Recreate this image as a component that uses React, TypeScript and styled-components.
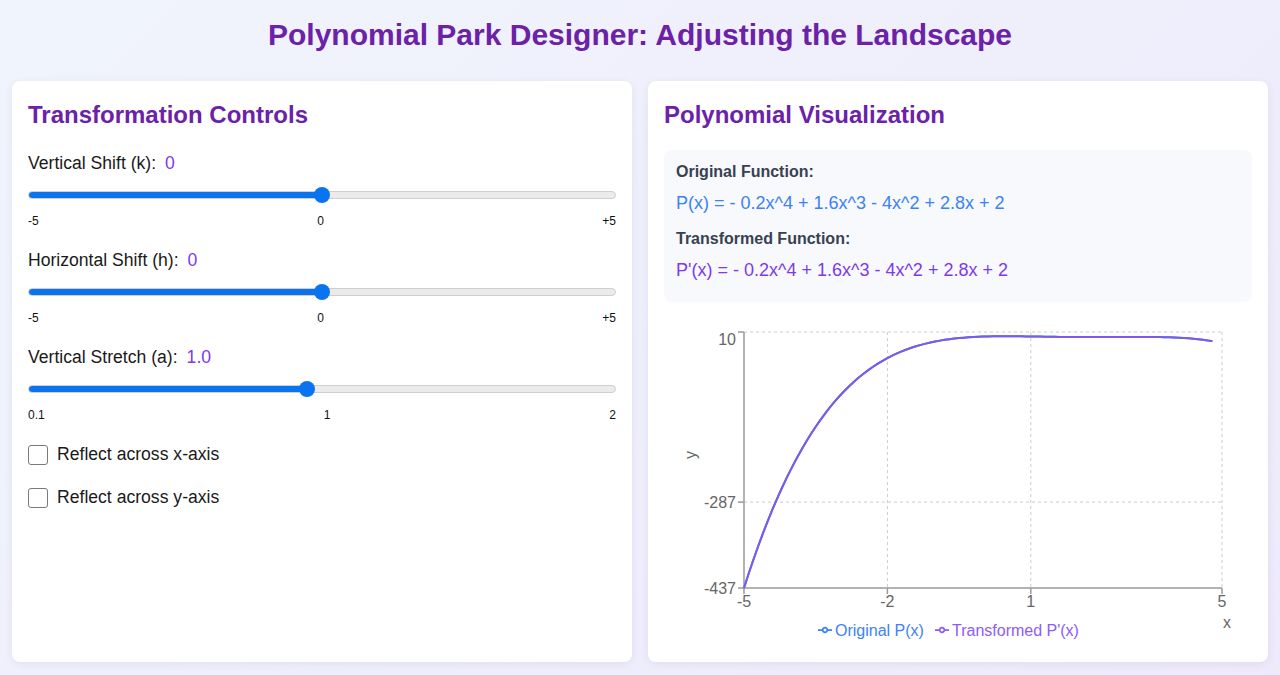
import React, { ChangeEvent, useMemo, useState } from 'react';
import styled, { createGlobalStyle } from 'styled-components';

const GlobalStyle = createGlobalStyle`
  * {
    box-sizing: border-box;
  }
  body {
    margin: 0;
    font-family: 'Liberation Sans', Arial, Helvetica, sans-serif;
    color: #1f1f1f;
  }
`;

const BASE = [2, 2.8, -4, 1.6, -0.2];

const StyledPage = styled.div`
  height: 100vh;
  display: flex;
  flex-direction: column;
  padding: 18px 12px 13px;
  background: linear-gradient(135deg, #f0f4fc 0%, #eeeafb 100%);
`;

const StyledTitle = styled.h1`
  margin: 0 0 29px;
  font-size: 30px;
  line-height: 34px;
  font-weight: 700;
  text-align: center;
  color: #6b21a8;
`;

const StyledGrid = styled.div`
  flex: 1;
  display: grid;
  grid-template-columns: 1fr 1fr;
  gap: 16px;
  min-height: 0;
`;

const StyledPanel = styled.section`
  background: #ffffff;
  border-radius: 8px;
  box-shadow: 0 2px 8px rgba(60, 40, 120, 0.08);
  padding: 20px 16px;
  display: flex;
  flex-direction: column;
  min-height: 0;
`;

const StyledHeading = styled.h2<{ $gap: number }>`
  margin: 0 0 ${(props) => props.$gap}px;
  font-size: 24px;
  line-height: 28px;
  font-weight: 700;
  color: #6b21a8;
`;

const StyledControls = styled.div`
  display: flex;
  flex-direction: column;
  gap: 22px;
`;

const StyledGroup = styled.div`
  display: flex;
  flex-direction: column;
`;

const StyledLabel = styled.div`
  font-size: 17.6px;
  line-height: 21px;
  color: #1a1a1a;
`;

const StyledValue = styled.span`
  margin-left: 9px;
  color: #7c3aed;
`;

const StyledRange = styled.input<{ $fill: number }>`
  appearance: none;
  -webkit-appearance: none;
  width: 100%;
  height: 16px;
  margin: 13px 0 11px;
  background: transparent;
  outline: none;

  &::-webkit-slider-runnable-track {
    height: 8px;
    border-radius: 4px;
    border: 1px solid #cfcfcf;
    background: linear-gradient(
      to right,
      #0a74f0 0,
      #0a74f0 calc(8px + ${(props) => props.$fill} * (100% - 16px)),
      #ebebeb calc(8px + ${(props) => props.$fill} * (100% - 16px)),
      #ebebeb 100%
    );
  }

  &::-webkit-slider-thumb {
    -webkit-appearance: none;
    width: 16px;
    height: 16px;
    margin-top: -5px;
    border-radius: 50%;
    background: #0a74f0;
    border: none;
  }
`;

const StyledTicks = styled.div`
  display: flex;
  justify-content: space-between;
  font-size: 12px;
  line-height: 14px;
  color: #111;
`;

const StyledCheckRow = styled.label`
  display: flex;
  align-items: center;
  gap: 9px;
  font-size: 17.6px;
  line-height: 21px;
  color: #1a1a1a;
  cursor: pointer;
`;

const StyledCheckbox = styled.input`
  appearance: none;
  -webkit-appearance: none;
  width: 20px;
  height: 20px;
  margin: 0;
  border: 1px solid #7a7a7a;
  border-radius: 3px;
  background: #fff;
  position: relative;

  &:checked {
    background: #0a74f0;
    border-color: #0a74f0;
  }
  &:checked::after {
    content: '';
    position: absolute;
    left: 6px;
    top: 2px;
    width: 5px;
    height: 10px;
    border: solid #fff;
    border-width: 0 2px 2px 0;
    transform: rotate(45deg);
  }
`;

const StyledFunctionBox = styled.div`
  background: #f8f9fc;
  border-radius: 8px;
  padding: 12px 12px 21px;
  display: flex;
  flex-direction: column;
  gap: 15px;
`;

const StyledFunctionTitle = styled.div`
  font-size: 16px;
  line-height: 19px;
  font-weight: 700;
  color: #374151;
  margin-bottom: 12px;
`;

const StyledFormula = styled.div<{ $color: string }>`
  font-size: 18px;
  line-height: 21px;
  color: ${(props) => props.$color};
`;

const StyledChart = styled.svg`
  display: block;
  margin-top: 16px;
  font-family: 'Liberation Sans', Arial, Helvetica, sans-serif;
`;

const fmt = (n: number) => String(Math.round(n * 100) / 100);

const formatPoly = (c: number[]) => {
  const parts: string[] = [];
  for (let p = c.length - 1; p >= 0; p--) {
    const v = Math.round(c[p] * 100) / 100;
    if (v === 0) continue;
    const sign = v < 0 ? '- ' : parts.length ? '+ ' : '';
    const pow = p === 0 ? '' : p === 1 ? 'x' : `x^${p}`;
    parts.push(`${sign}${fmt(Math.abs(v))}${pow}`);
  }
  return parts.length ? parts.join(' ') : '0';
};

const binom = (n: number, k: number) => {
  let r = 1;
  for (let i = 1; i <= k; i++) r = (r * (n - k + i)) / i;
  return r;
};

const transform = (k: number, h: number, a: number, rx: boolean, ry: boolean) => {
  const r = ry ? -1 : 1;
  const s = rx ? -a : a;
  const out = [0, 0, 0, 0, 0];
  BASE.forEach((c, n) => {
    for (let j = 0; j <= n; j++) {
      out[j] += c * Math.pow(r, n) * binom(n, j) * Math.pow(-h, n - j);
    }
  });
  const res = out.map((v) => v * s);
  res[0] += k;
  return res;
};

const evalPoly = (c: number[], x: number) => c.reduce((acc, v, i) => acc + v * Math.pow(x, i), 0);

type SliderProps = {
  label: string;
  value: number;
  display: string;
  min: number;
  max: number;
  step: number;
  ticks: string[];
  onChange: (v: number) => void;
};

const Slider = ({ label, value, display, min, max, step, ticks, onChange }: SliderProps) => (
  <StyledGroup>
    <StyledLabel>
      {label}
      <StyledValue>{display}</StyledValue>
    </StyledLabel>
    <StyledRange
      type='range'
      min={min}
      max={max}
      step={step}
      value={value}
      $fill={(value - min) / (max - min)}
      onChange={(e: ChangeEvent<HTMLInputElement>) => onChange(parseFloat(e.target.value))}
    />
    <StyledTicks>
      {ticks.map((t) => (
        <span key={t}>{t}</span>
      ))}
    </StyledTicks>
  </StyledGroup>
);

// chart geometry, in svg units
const W = 588;
const H = 324;
const PL = 80;
const PR = 558;
const PT = 14;
const PB = 270;
const XT = [-5, -2, 1, 5];

const LegendIcon = ({ x, color }: { x: number; color: string }) => (
  <g transform={`translate(${x}, 305) scale(0.4375)`}>
    <path
      d='M0,16h10.67A5.33,5.33,0,1,1,21.33,16H32M21.33,16A5.33,5.33,0,1,1,10.67,16'
      fill='none'
      stroke={color}
      strokeWidth={4}
    />
  </g>
);

const Chart = ({ original, changed }: { original: number[]; changed: number[] }) => {
  const xs = useMemo(() => {
    const arr: number[] = [];
    for (let i = 0; i <= 98; i++) arr.push(-5 + i * 0.1);
    return arr;
  }, []);

  const ys1 = xs.map((x) => evalPoly(original, x));
  const ys2 = xs.map((x) => evalPoly(changed, x));
  const all = [...ys1, ...ys2];
  const lo = Math.floor(Math.min(...all) + 1e-9);
  const hi = Math.ceil(Math.max(...all) / 10) * 10;
  const mid = lo + Math.ceil((hi - lo) / 3 / 10) * 10;
  const yTicks = [hi, mid, lo];

  const sx = (x: number) => PL + ((x + 5) / 10) * (PR - PL);
  const sy = (v: number) => PB - ((v - lo) / (hi - lo)) * (PB - PT);
  const path = (ys: number[]) =>
    ys.map((v, i) => `${i ? 'L' : 'M'}${sx(xs[i]).toFixed(2)},${sy(v).toFixed(2)}`).join('');

  return (
    <StyledChart width={W} height={H} viewBox={`0 0 ${W} ${H}`}>
      <g stroke='#cccccc' strokeDasharray='3 3'>
        {yTicks.slice(0, 2).map((t) => (
          <line key={t} x1={PL} x2={PR} y1={sy(t)} y2={sy(t)} />
        ))}
        {XT.slice(1).map((t) => (
          <line key={t} x1={sx(t)} x2={sx(t)} y1={PT} y2={PB} />
        ))}
      </g>
      <g stroke='#9a9a9a' strokeWidth={1.5}>
        <line x1={PL} x2={PL} y1={PT} y2={PB} />
        <line x1={PL} x2={PR} y1={PB} y2={PB} />
        {yTicks.map((t) => (
          <line key={t} x1={PL - 6} x2={PL} y1={sy(t)} y2={sy(t)} />
        ))}
        {XT.map((t) => (
          <line key={t} x1={sx(t)} x2={sx(t)} y1={PB} y2={PB + 6} />
        ))}
      </g>
      <g fill='#666666' fontSize={16}>
        {yTicks.map((t, i) => (
          <text key={t} x={PL - 8} y={sy(t) + (i === 0 ? 13 : 6)} textAnchor='end'>
            {t}
          </text>
        ))}
        {XT.map((t) => (
          <text key={t} x={sx(t)} y={PB + 19} textAnchor='middle'>
            {t}
          </text>
        ))}
        <text x={27} y={137} textAnchor='middle' transform='rotate(-90 27 137)' dy={5}>
          y
        </text>
        <text x={563} y={310} textAnchor='middle'>
          x
        </text>
      </g>
      <path d={path(ys1)} fill='none' stroke='#3b82f6' strokeWidth={2} />
      <path d={path(ys2)} fill='none' stroke='#7c5ce6' strokeWidth={2} />
      <g fontSize={16}>
        <LegendIcon x={154} color='#3b82f6' />
        <text x={171} y={318} fill='#3b82f6'>
          Original P(x)
        </text>
        <LegendIcon x={271} color='#8b5cf6' />
        <text x={288} y={318} fill='#8b5cf6'>
          Transformed P'(x)
        </text>
      </g>
    </StyledChart>
  );
};

const App = () => {
  const [k, setK] = useState(0);
  const [h, setH] = useState(0);
  const [a, setA] = useState(1);
  const [reflectX, setReflectX] = useState(false);
  const [reflectY, setReflectY] = useState(false);

  const changed = useMemo(() => transform(k, h, a, reflectX, reflectY), [k, h, a, reflectX, reflectY]);

  return (
    <StyledPage>
      <GlobalStyle />
      <StyledTitle>Polynomial Park Designer: Adjusting the Landscape</StyledTitle>
      <StyledGrid>
        <StyledPanel>
          <StyledHeading $gap={24}>Transformation Controls</StyledHeading>
          <StyledControls>
            <Slider
              label='Vertical Shift (k):'
              value={k}
              display={String(k)}
              min={-5}
              max={5}
              step={0.5}
              ticks={['-5', '0', '+5']}
              onChange={setK}
            />
            <Slider
              label='Horizontal Shift (h):'
              value={h}
              display={String(h)}
              min={-5}
              max={5}
              step={0.5}
              ticks={['-5', '0', '+5']}
              onChange={setH}
            />
            <Slider
              label='Vertical Stretch (a):'
              value={a}
              display={a.toFixed(1)}
              min={0.1}
              max={2}
              step={0.1}
              ticks={['0.1', '1', '2']}
              onChange={setA}
            />
            <StyledCheckRow>
              <StyledCheckbox type='checkbox' checked={reflectX} onChange={() => setReflectX(!reflectX)} />
              Reflect across x-axis
            </StyledCheckRow>
            <StyledCheckRow>
              <StyledCheckbox type='checkbox' checked={reflectY} onChange={() => setReflectY(!reflectY)} />
              Reflect across y-axis
            </StyledCheckRow>
          </StyledControls>
        </StyledPanel>
        <StyledPanel>
          <StyledHeading $gap={21}>Polynomial Visualization</StyledHeading>
          <StyledFunctionBox>
            <div>
              <StyledFunctionTitle>Original Function:</StyledFunctionTitle>
              <StyledFormula $color='#3b82f6'>P(x) = {formatPoly(BASE)}</StyledFormula>
            </div>
            <div>
              <StyledFunctionTitle>Transformed Function:</StyledFunctionTitle>
              <StyledFormula $color='#7c3aed'>P'(x) = {formatPoly(changed)}</StyledFormula>
            </div>
          </StyledFunctionBox>
          <Chart original={BASE} changed={changed} />
        </StyledPanel>
      </StyledGrid>
    </StyledPage>
  );
};

export default App;
